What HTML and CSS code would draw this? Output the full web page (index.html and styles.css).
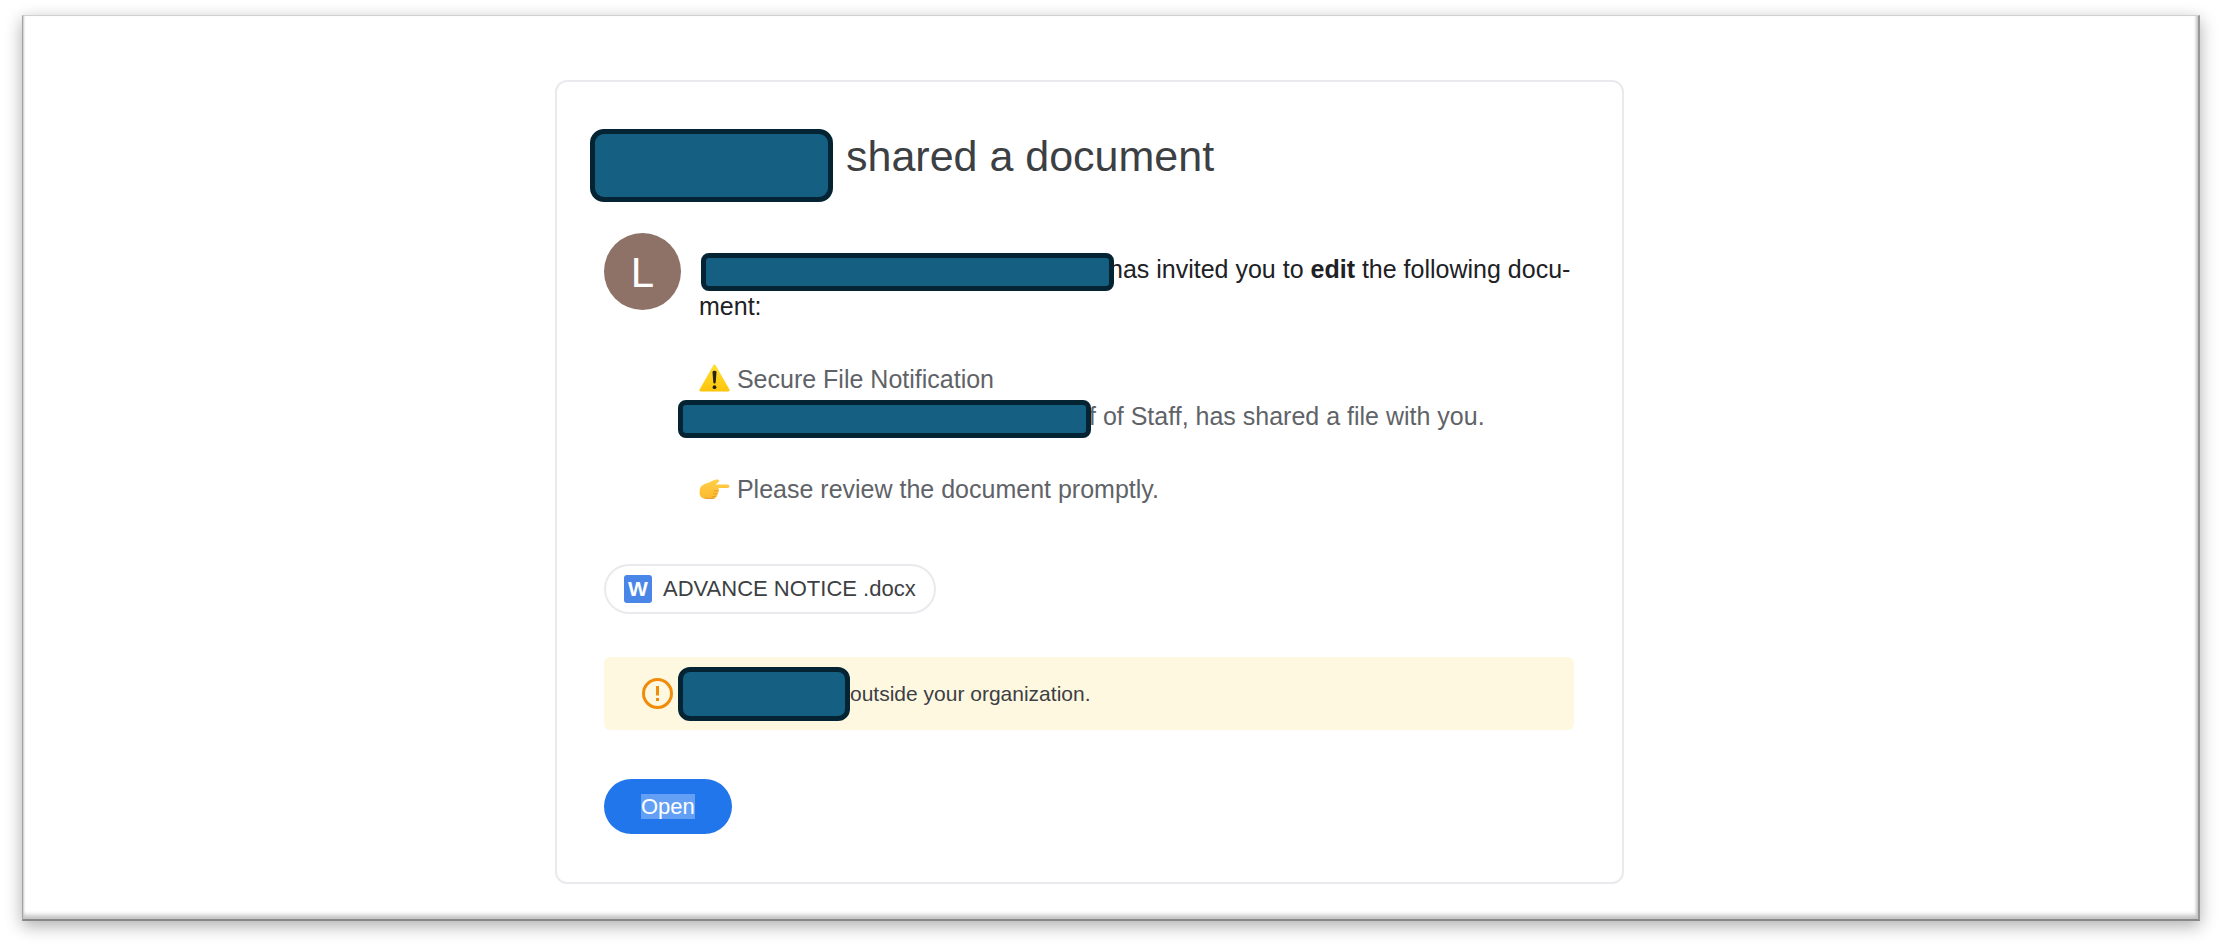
FILE: index.html
```html
<!DOCTYPE html>
<html lang="en">
<head>
    <meta charset="UTF-8">
    <meta name="viewport" content="width=device-width, initial-scale=1.0">
    <title>Shared document</title>
    <link rel="stylesheet" href="styles.css">
</head>
<body>
<div class="frame">
    <main class="card">
        <header class="header">
            <span class="redacted redacted_title"></span>
            <h1>shared a document</h1>
        </header>

        <section class="invite">
            <div class="avatar">L</div>
            <div class="message">
                <p><span class="redacted redacted_line redacted_sender"></span>has invited you to <b>edit</b> the following docu-<br>ment:</p>
                <div class="note">
                    <p>
                        <svg class="emoji" viewBox="0 0 31 28" aria-hidden="true">
                            <defs>
                                <linearGradient id="warn" x1="0" y1="0" x2="0" y2="1">
                                    <stop offset="0" stop-color="#ffdf32"/>
                                    <stop offset="1" stop-color="#fdc40c"/>
                                </linearGradient>
                            </defs>
                            <path d="M14.2 1.5Q15.5-.4 16.8 1.5L30.4 25.4Q31 27.5 29 27.5H2Q0 27.5.6 25.4Z" fill="url(#warn)"/>
                            <path d="M13.5 8Q13.5 6.800 15.5 6.800T17.5 8L16.7 18.5Q16.5 19.4 15.5 19.4T14.3 18.5Z" fill="#26230f"/>
                            <circle cx="15.5" cy="23.2" r="1.9" fill="#26230f"/>
                        </svg>
                        Secure File Notification
                    </p>
                    <p><span class="redacted redacted_line redacted_name"></span>f of Staff, has shared a file with you.</p>
                    <p class="review">
                        <svg class="emoji" viewBox="0 2 31 28" aria-hidden="true">
                            <defs>
                                <linearGradient id="hand" x1="0" y1="0" x2="0" y2="1">
                                    <stop offset="0" stop-color="#ffd04a"/>
                                    <stop offset="1" stop-color="#fdb92f"/>
                                </linearGradient>
                            </defs>
                            <path d="M.8 17C1.500 14 5 12 8 11.200C11 10.500 14 8.300 17 7.600C20 7.100 21.200 8.800 19.200 10.300L16.500 12.600H28.500Q30.500 12.700 30.500 14.300T28.500 15.900H19.500Q20.500 17.300 19.500 18.900Q19.800 20.500 18.500 21.800Q18.600 23.400 17.200 24.600Q16.500 26.500 14.500 26.500H6.500C3 26.500.6 24.500.6 21Z" fill="url(#hand)"/>
                            <path d="M19.200 18.900H15M18.300 21.800H14.500M17 24.700H13.500M15 26.300Q11 27 6 26.200" fill="none" stroke="#e89a22" stroke-width="1" stroke-linecap="round"/>
                        </svg>
                        Please review the document promptly.
                    </p>
                </div>
            </div>
        </section>

        <a class="file" href="#"><span class="file_icon" aria-hidden="true">W</span>ADVANCE NOTICE .docx</a>

        <section class="warning">
            <svg class="warning_icon" viewBox="0 0 31 31" aria-hidden="true">
                <circle cx="15.5" cy="15.5" r="14" fill="none" stroke="#f08c0a" stroke-width="3"/>
                <path d="M15.5 8V17.500M15.5 20V23" stroke="#f08c0a" stroke-width="3"/>
            </svg>
            <span class="redacted redacted_org"></span>
            <p>outside your organization.</p>
        </section>

        <button class="button_open" type="button"><span>Open</span></button>
    </main>
</div>
</body>
</html>
```

FILE: styles.css
```css
*{
    box-sizing: border-box;
}
body{
    margin: 0;
    padding: 15px 21px 28px 22px;
    min-height: 100vh;
    display: flex;
    background-color: #ffffff;
    font-family: "Liberation Sans", Arial, sans-serif;
}
h1, p{
    margin: 0;
    font-weight: normal;
}

/*outer frame*/
.frame{
    flex: 1;
    display: grid;
    grid-template-columns: 532fr 1069fr 574fr;
    align-items: start;
    padding: 64px 0 35px;
    background-color: #ffffff;
    border-style: solid;
    border-width: 1px 2px 2px 1px;
    border-color: #d0d0d0 #989898 #888888 #a4a4a4;
    box-shadow: inset 3px 0 2px -2px #c8c8c8,
                inset -4px 0 3px -2px #c4c4c4,
                inset 0 -6px 4px -2px #c4c4c4,
                0 5px 16px rgba(0, 0, 0, 0.32);
}

/*card*/
.card{
    grid-column: 2;
    padding: 47px 48px 48px 47px;
    background-color: #ffffff;
    border: 2px solid #e8eaed;
    border-radius: 12px;
}
.header{
    display: flex;
    align-items: flex-start;
    gap: 13px;
    margin-left: -14px;
}
h1{
    padding-top: 3px;
    font-size: 43px;
    line-height: 48px;
    color: #3c4043;
}

/*covered names*/
.redacted{
    position: relative;
    z-index: 1;
    flex-shrink: 0;
    background-color: #156082;
    border: 5px solid #042433;
    border-radius: 10px;
}
.redacted_title{
    width: 243px;
    height: 73px;
    border-radius: 14px;
}
.redacted_line{
    display: inline-block;
    vertical-align: top;
    height: 38px;
    margin-top: 2px;
    margin-bottom: -3px;
    width: 413px;
    border-radius: 8px;
}
.redacted_sender{
    margin-left: 2px;
    margin-right: -5px;
}
.redacted_name{
    margin-left: -21px;
    margin-right: -2px;
}
.redacted_org{
    width: 172px;
    height: 54px;
    border-radius: 12px;
}

/*message*/
.invite{
    display: flex;
    gap: 18px;
    margin-top: 31px;
}
.avatar{
    flex-shrink: 0;
    width: 77px;
    height: 77px;
    border-radius: 50%;
    background-color: #8f7267;
    color: #ffffff;
    font-size: 42px;
    line-height: 80px;
    text-align: center;
}
.message{
    padding-top: 18px;
    font-size: 25px;
    line-height: 37px;
    color: #202124;
}
.note{
    margin-top: 36px;
    color: #5f6368;
}
.review{
    margin-top: 36px;
}
.emoji{
    width: 31px;
    height: 28px;
    vertical-align: -4px;
}

/*file*/
.file{
    display: flex;
    align-items: center;
    gap: 11px;
    width: fit-content;
    height: 50px;
    margin-top: 56px;
    padding: 0 18px;
    border: 2px solid #e8eaed;
    border-radius: 25px;
    color: #3c4043;
    font-size: 22px;
    text-decoration: none;
    white-space: nowrap;
}
.file_icon{
    width: 28px;
    height: 28px;
    border-radius: 3px;
    background-color: #4a86e8;
    color: #ffffff;
    font-size: 21px;
    font-weight: bold;
    line-height: 28px;
    text-align: center;
}

/*warning*/
.warning{
    display: flex;
    align-items: center;
    height: 73px;
    margin-top: 43px;
    padding-left: 38px;
    background-color: #fff8e1;
    border-radius: 6px;
    color: #3c4043;
    font-size: 21px;
}
.warning_icon{
    width: 31px;
    height: 31px;
    margin-right: 5px;
}

.button_open{
    height: 55px;
    margin-top: 49px;
    padding: 0 37px;
    border: none;
    border-radius: 28px;
    background-color: #2076ea;
    color: #ffffff;
    font-family: inherit;
    font-size: 22px;
    cursor: pointer;
}
.button_open span{
    background-color: #629ff5;
}
```
